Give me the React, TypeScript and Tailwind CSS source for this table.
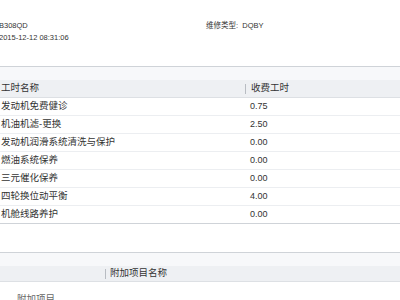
const rows = [
  { name: "发动机免费健诊", hours: "0.75" },
  { name: "机油机滤-更换", hours: "2.50" },
  { name: "发动机润滑系统清洗与保护", hours: "0.00" },
  { name: "燃油系统保养", hours: "0.00" },
  { name: "三元催化保养", hours: "0.00" },
  { name: "四轮换位动平衡", hours: "4.00" },
  { name: "机舱线路养护", hours: "0.00" },
];

export default function App() {
  return (
    <div
      className="w-[400px] h-[300px] overflow-hidden bg-white text-[#333]"
      style={{ fontFamily: '"Liberation Sans", "Noto Sans CJK SC", sans-serif' }}
    >
      {/* order header */}
      <div className="h-[67px] border-b border-[#cfd3d8] flex pt-[20px] text-[7.5px] leading-[12px]">
        <div className="w-[207px] -ml-[1px]">
          <div>B308QD</div>
          <div>2015-12-12 08:31:06</div>
        </div>
        <div>维修类型:&nbsp; DQBY</div>
      </div>

      {/* labour table */}
      <div className="h-[13px] bg-[#f7f8fa]" />
      <div className="h-[18px] bg-[#eef0f3] border-b border-[#dde0e4] flex items-center text-[9.5px]">
        <div className="w-[245px] pl-[1px]">工时名称</div>
        <div className="w-px h-[10px] bg-[#b8bcc2]" />
        <div className="pl-[5px]">收费工时</div>
      </div>
      {rows.map((r) => (
        <div
          key={r.name}
          className="h-[18px] border-b border-[#eceef1] flex items-center text-[9.5px]"
        >
          <div className="w-[250px] pl-[1px]">{r.name}</div>
          <div className="text-[9px]">{r.hours}</div>
        </div>
      ))}
      <div className="h-[29px] border-t border-[#cfd3d8] -mt-px" />

      {/* extra items table */}
      <div className="h-[14px] border-t border-[#cfd3d8] bg-[#f7f8fa]" />
      <div className="h-[16px] bg-[#eef0f3] border-b border-[#dde0e4] flex items-center text-[9.5px]">
        <div className="w-[105px]" />
        <div className="w-px h-[10px] bg-[#b8bcc2]" />
        <div className="pl-[4px]">附加项目名称</div>
      </div>
      <div className="h-[18px] flex items-end pl-[17px] text-[9.5px] text-[#666]">
        <div className="translate-y-[6px]">附加项目</div>
      </div>
    </div>
  );
}
